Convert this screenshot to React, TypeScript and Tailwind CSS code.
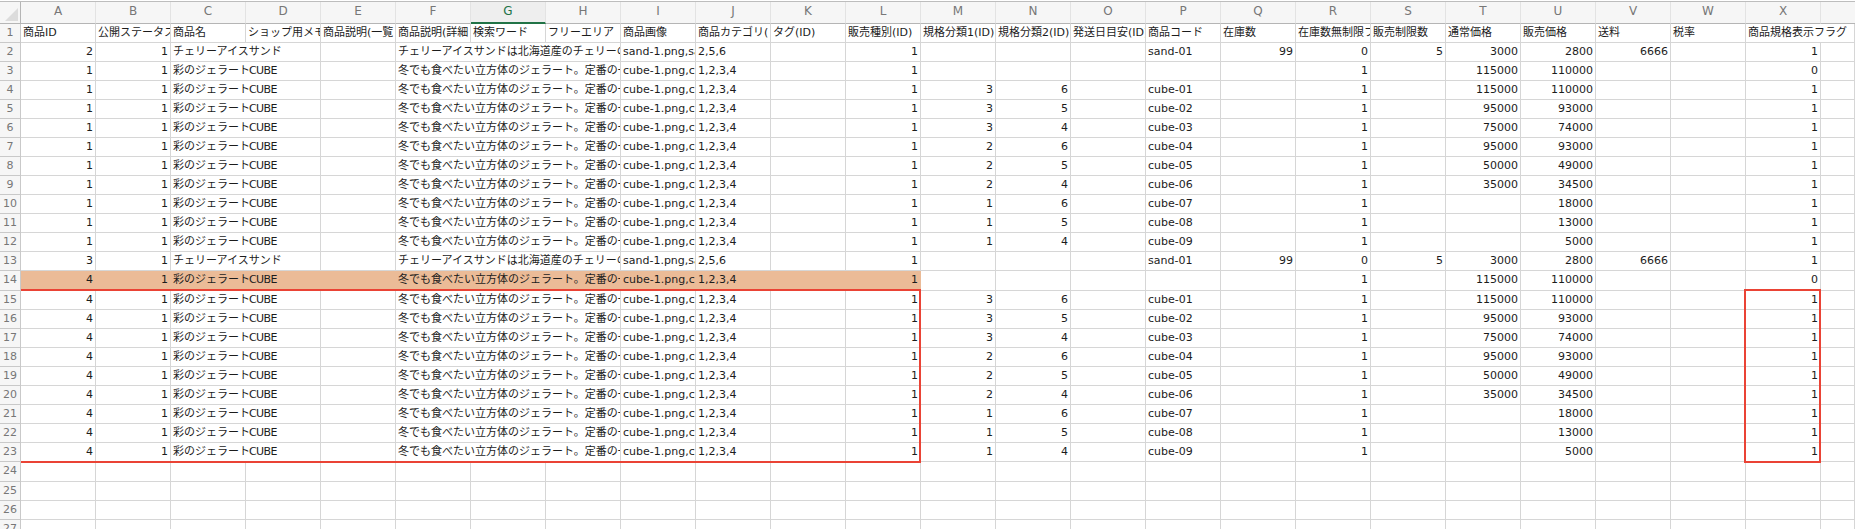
const CHERRY_NAME = 'チェリーアイスサンド';
const CHERRY_DESC = 'チェリーアイスサンドは北海道産のチェリーの果肉を使った';
const CUBE_DESC = '冬でも食べたい立方体のジェラート。定番の一品です';

const COLUMNS = ['A', 'B', 'C', 'D', 'E', 'F', 'G', 'H', 'I', 'J', 'K', 'L', 'M', 'N', 'O', 'P', 'Q', 'R', 'S', 'T', 'U', 'V', 'W', 'X'];

const HEADERS = [
  '商品ID', '公開ステータス', '商品名', 'ショップ用メモ', '商品説明(一覧', '商品説明(詳細', '検索ワード', 'フリーエリア',
  '商品画像', '商品カテゴリ(', 'タグ(ID)', '販売種別(ID)', '規格分類1(ID)', '規格分類2(ID)', '発送日目安(ID)', '商品コード',
  '在庫数', '在庫数無制限フラグ', '販売制限数', '通常価格', '販売価格', '送料', '税率', '商品規格表示フラグ',
];

type Variant = [number | '', number | '', string, number | '', number];

const VARIANTS: Variant[] = [
  [3, 6, 'cube-01', 115000, 110000],
  [3, 5, 'cube-02', 95000, 93000],
  [3, 4, 'cube-03', 75000, 74000],
  [2, 6, 'cube-04', 95000, 93000],
  [2, 5, 'cube-05', 50000, 49000],
  [2, 4, 'cube-06', 35000, 34500],
  [1, 6, 'cube-07', '', 18000],
  [1, 5, 'cube-08', '', 13000],
  [1, 4, 'cube-09', '', 5000],
];

function Num({ v, fill }: { v?: number | ''; fill?: boolean }) {
  return (
    <div className={`overflow-hidden border-r border-b border-[#d6d6d6] pr-[2px] text-right ${fill ? 'bg-[#ebbb97] border-[#ebbb97]' : ''}`}>
      {v}
    </div>
  );
}

function Txt({ v, span, fill }: { v?: React.ReactNode; span?: 'two' | 'three'; fill?: boolean }) {
  const spanClass = span === 'two' ? 'col-span-2' : span === 'three' ? 'col-span-3' : '';
  return (
    <div className={`overflow-hidden whitespace-nowrap border-r border-b border-[#d6d6d6] pl-[2px] ${spanClass} ${fill ? 'bg-[#ebbb97] border-[#ebbb97]' : ''}`}>
      {v}
    </div>
  );
}

function RowNo({ n }: { n: number }) {
  return (
    <div className="border-r border-b border-[#c9c9c9] bg-[#f6f6f6] text-center text-[#777777]">{n}</div>
  );
}

// the latin part sits tighter than the kana in the sheet
const cubeName = (
  <>
    彩のジェラート<span className="-ml-px tracking-[-0.6px]">CUBE</span>
  </>
);

function ProductRow({
  n, id, cherry, variant, flag, fill, tall,
}: {
  n: number; id: number; cherry?: boolean; variant?: Variant; flag: number; fill?: boolean; tall?: boolean;
}) {
  return (
    <div className={`grid grid-cols-[21px_repeat(24,75px)_1fr] leading-[17px] ${tall ? 'h-[20px]' : 'h-[19px]'}`}>
      <RowNo n={n} />
      <Num v={id} fill={fill} />
      <Num v={1} fill={fill} />
      <Txt v={cherry ? CHERRY_NAME : cubeName} span="two" fill={fill} />
      <Txt fill={fill} />
      <Txt v={cherry ? CHERRY_DESC : CUBE_DESC} span="three" fill={fill} />
      <Txt v={cherry ? 'sand-1.png,sand-2.png' : 'cube-1.png,cube-2.png'} fill={fill} />
      <Txt v={cherry ? '2,5,6' : '1,2,3,4'} fill={fill} />
      <Txt fill={fill} />
      <Num v={1} fill={fill} />
      <Num v={variant?.[0]} />
      <Num v={variant?.[1]} />
      <Txt />
      <Txt v={cherry ? 'sand-01' : variant?.[2]} />
      <Num v={cherry ? 99 : ''} />
      <Num v={cherry ? 0 : 1} />
      <Num v={cherry ? 5 : ''} />
      <Num v={cherry ? 3000 : variant ? variant[3] : 115000} />
      <Num v={cherry ? 2800 : variant ? variant[4] : 110000} />
      <Num v={cherry ? 6666 : ''} />
      <Txt />
      <Num v={flag} />
      <Txt />
    </div>
  );
}

function EmptyRow({ n, tall }: { n: number; tall?: boolean }) {
  return (
    <div className={`grid grid-cols-[21px_repeat(24,75px)_1fr] leading-[17px] ${tall ? 'h-[20px]' : 'h-[19px]'}`}>
      <RowNo n={n} />
      {COLUMNS.map((c) => <Txt key={c} />)}
      <Txt />
    </div>
  );
}

export default function App() {
  return (
    <div className="relative h-[529px] w-full overflow-hidden bg-white font-['DejaVu_Sans','Noto_Sans_CJK_JP',sans-serif] text-[11px] text-[#1c1c1c]">
      <div className="mt-px grid h-[23px] grid-cols-[21px_repeat(24,75px)_1fr] border-t border-[#bdbdbd] leading-[19px]">
        <div className="relative border-r border-b border-[#b5b5b5] bg-[#f6f6f6]">
          <div className="absolute bottom-[2px] right-[2px] h-0 w-0 border-b-[13px] border-l-[13px] border-b-[#dcdcdc] border-l-transparent" />
        </div>
        {COLUMNS.map((c) => (
          <div
            key={c}
            className={c === 'G'
              ? 'border-b-2 border-r border-b-[#217346] border-r-[#e3e3e3] bg-[#eeeeee] text-center text-[12px] text-[#217346]'
              : 'border-r border-b border-r-[#e3e3e3] border-b-[#b5b5b5] bg-[#f6f6f6] text-center text-[12px] text-[#777777]'}
          >
            {c}
          </div>
        ))}
        <div className="border-b border-[#b5b5b5] bg-[#f6f6f6]" />
      </div>

      <div className="grid h-[19px] grid-cols-[21px_repeat(24,75px)_1fr] leading-[17px]">
        <RowNo n={1} />
        {HEADERS.map((h, i) => (i === 23 ? null : <Txt key={h} v={h} />))}
        <Txt v={HEADERS[23]} span="two" />
      </div>

      <ProductRow n={2} id={2} cherry flag={1} />
      <ProductRow n={3} id={1} flag={0} />
      {VARIANTS.map((v, i) => <ProductRow key={v[2]} n={i + 4} id={1} variant={v} flag={1} />)}
      <ProductRow n={13} id={3} cherry flag={1} />
      <ProductRow n={14} id={4} flag={0} fill tall />
      {VARIANTS.map((v, i) => <ProductRow key={v[2]} n={i + 15} id={4} variant={v} flag={1} />)}
      <EmptyRow n={24} tall />
      <EmptyRow n={25} />
      <EmptyRow n={26} />
      <EmptyRow n={27} />

      {/* red annotation frames */}
      <div className="pointer-events-none absolute left-[21px] top-[289px] h-[174px] w-[900px] border-y-2 border-r-2 border-[#ea4335]" />
      <div className="pointer-events-none absolute left-[1744px] top-[289px] h-[174px] w-[77px] border-2 border-[#ea4335]" />
    </div>
  );
}
